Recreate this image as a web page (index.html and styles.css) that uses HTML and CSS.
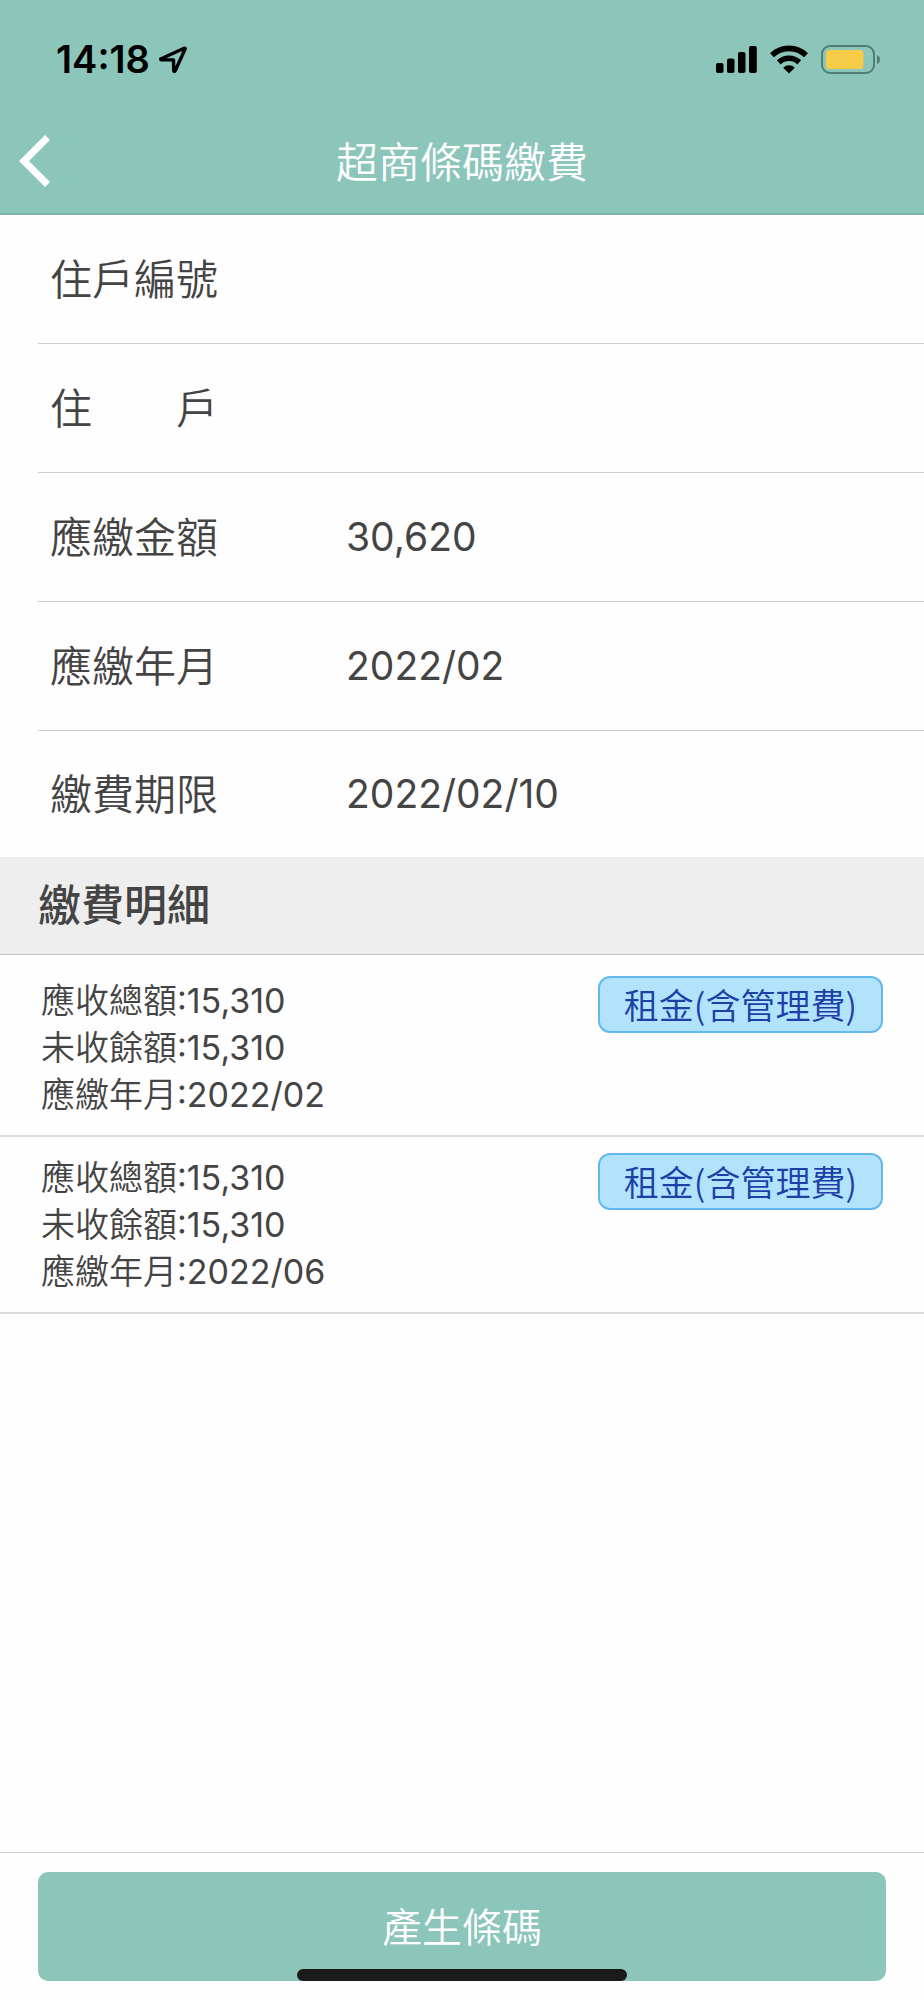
FILE: index.html
```html
<!DOCTYPE html>
<html lang="zh-Hant">
<head>
<meta charset="utf-8">
<meta name="viewport" content="width=device-width, initial-scale=1">
<title>超商條碼繳費</title>
<link rel="stylesheet" href="styles.css">
</head>
<body>
<div class="app">
  <header class="top">
    <div class="status">
      <div class="status-left">
        <span class="time">14:18</span>
        <svg width="30" height="30" viewBox="0 0 30 30" aria-hidden="true"><path d="M3.2 14.7 26.2 4.2c.7-.3 1.2.2.9.9L17.2 26.8c-.5 1-1.500.8-1.500-.3l-.2-10.600-11.900-.2c-1 0-1.200-.7-.4-1z" fill="none" stroke="#000" stroke-width="3.400" stroke-linejoin="round"/></svg>
      </div>
      <div class="status-right">
        <svg width="41" height="28" viewBox="0 0 41 28" aria-hidden="true"><rect x="0" y="18" width="7.500" height="10" rx="2"/><rect x="11" y="13.500" width="7.500" height="14.500" rx="2"/><rect x="22" y="7" width="7.500" height="21" rx="2"/><rect x="33" y="1" width="7.800" height="27" rx="2"/></svg>
        <svg width="38" height="29" viewBox="0 0 38 29" aria-hidden="true"><g fill="none" stroke="#000" stroke-width="5.600"><path d="M2 10.200a24.500 24.500 0 0 1 34 0"/><path d="M8.800 17.400a14.800 14.800 0 0 1 20.400 0"/></g><path d="M19 28.500 13.200 22.700a8.300 8.300 0 0 1 11.600 0z"/></svg>
        <svg width="60" height="29" viewBox="0 0 60 29" aria-hidden="true"><rect x="1" y="1" width="52" height="27" rx="8" fill="none" stroke="#507e75" stroke-width="2"/><rect x="5" y="5" width="37.500" height="19" rx="3.500" fill="#f6cb45"/><path d="M56 10c4 1 4 8 0 9z" fill="#507e75"/></svg>
      </div>
    </div>
    <div class="nav">
      <button class="back" type="button" aria-label="返回"><svg width="32" height="54" viewBox="0 0 32 54" aria-hidden="true"><path d="M28.500 3.500 5 27l23.500 23.500" fill="none" stroke="#fff" stroke-width="7"/></svg></button>
      <h1 class="title">超商條碼繳費</h1>
    </div>
  </header>
  <main class="main">
    <dl class="fields">
      <div class="field"><dt>住戶編號</dt><dd></dd></div>
      <div class="field"><dt>住　　戶</dt><dd></dd></div>
      <div class="field"><dt>應繳金額</dt><dd>30,620</dd></div>
      <div class="field"><dt>應繳年月</dt><dd>2022/02</dd></div>
      <div class="field"><dt>繳費期限</dt><dd>2022/02/10</dd></div>
    </dl>
    <h2 class="section">繳費明細</h2>
    <ul class="items">
      <li class="item">
        <div class="lines">
          <p>應收總額<span class="num">:15,310</span></p>
          <p>未收餘額<span class="num">:15,310</span></p>
          <p>應繳年月<span class="num">:2022/02</span></p>
        </div>
        <span class="tag">租金(含管理費)</span>
      </li>
      <li class="item">
        <div class="lines">
          <p>應收總額<span class="num">:15,310</span></p>
          <p>未收餘額<span class="num">:15,310</span></p>
          <p>應繳年月<span class="num">:2022/06</span></p>
        </div>
        <span class="tag">租金(含管理費)</span>
      </li>
    </ul>
  </main>
  <footer class="footer">
    <button class="submit" type="button">產生條碼</button>
    <div class="home"></div>
  </footer>
</div>
</body>
</html>
```
FILE: styles.css
```css
* { box-sizing: border-box; margin: 0; padding: 0; }
body {
  background: #fefefe;
  color: #444;
  font-family: Inter, "Noto Sans CJK TC", sans-serif;
  font-weight: 350;
}
button { border: 0; background: none; font: inherit; color: inherit; }
svg { display: block; }
.app { display: flex; flex-direction: column; min-height: 100vh; }

.top {
  background: #8cc5ba;
  border-bottom: 2px solid #80b3a9;
}
.status {
  display: flex;
  justify-content: space-between;
  align-items: center;
  height: 118px;
  padding: 0 43px 0 56px;
}
.status-left { display: flex; align-items: center; gap: 8px; }
.status-right { display: flex; align-items: center; gap: 13px; }
.time { color: #000; font-size: 38px; font-weight: 600; line-height: 44px; }
.nav {
  display: grid;
  grid-template-columns: 100px 1fr 100px;
  align-items: center;
  height: 95px;
  padding-bottom: 9px;
}
.back { padding-left: 19px; height: 86px; }
.title {
  padding-top: 4px;
  color: #fff;
  font-size: 42px;
  font-weight: 350;
  line-height: 60px;
  text-align: center;
}

.main { flex: 1; }
.fields { padding-left: 38px; }
.field {
  display: flex;
  align-items: center;
  height: 129px;
  padding-bottom: 2px;
  border-bottom: 1px solid #ccc;
}
.field:last-child { height: 126px; border-bottom: 0; }
.field dt { width: 308px; padding: 0 0 4px 12px; font-size: 42px; }
.field dd { font-size: 39px; font-weight: 400; }
.section {
  padding: 0 38px;
  background: #eee;
  border-bottom: 1px solid #c4c4c4;
  font-size: 43px;
  font-weight: 500;
  line-height: 97px;
}
.items { list-style: none; padding-top: 5px; }
.item {
  display: flex;
  justify-content: space-between;
  align-items: flex-start;
  padding: 16px 41px;
  border-bottom: 2px solid #dcdcdc;
}
.lines { padding: 1px 0; font-size: 34px; line-height: 47px; }
.num { font-weight: 400; }
.tag {
  padding: 0 24px 2px;
  border: 2px solid #62b9f0;
  border-radius: 12px;
  background: #b2e3fc;
  color: #1c3fa8;
  font-family: "Noto Sans CJK TC", sans-serif;
  font-size: 35px;
  line-height: 51px;
}

.footer {
  position: relative;
  padding: 19px 38px;
  border-top: 1px solid #ccc;
}
.submit {
  display: block;
  width: 100%;
  height: 109px;
  padding-bottom: 4px;
  border-radius: 10px;
  background: #8cc5ba;
  color: #fff;
  font-size: 40px;
}
.home {
  position: absolute;
  left: 50%;
  bottom: 19px;
  width: 330px;
  height: 12px;
  margin-left: -165px;
  border-radius: 6px;
  background: #1a1a1a;
}
```
